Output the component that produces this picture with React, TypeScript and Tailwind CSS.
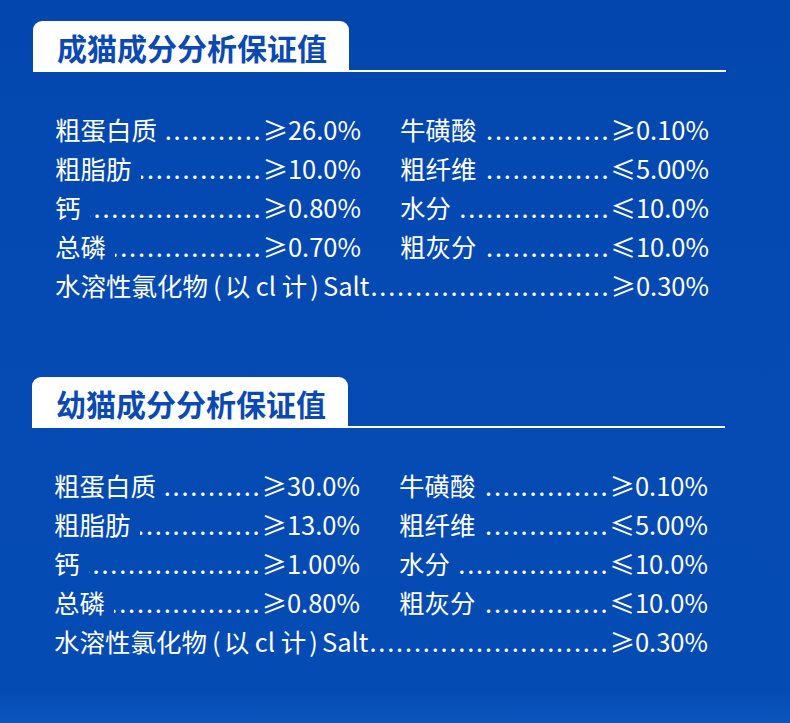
import React from "react";

type Item = { label: React.ReactNode; value: string; space?: boolean };

const DOTS = ".".repeat(110);

function Row({ label, value, space = true, className = "" }: Item & { className?: string }) {
  return (
    <div className={`flex h-[39px] items-center whitespace-nowrap ${className}`}>
      <span className="flex items-center">{label}</span>
      <span className={`flex flex-1 justify-end overflow-hidden tracking-[1.8px] ${space ? "ml-[9px]" : "ml-[1px]"}`}>
        <span>{DOTS}</span>
      </span>
      <span>{value}</span>
    </div>
  );
}

const saltLabel = (
  <>
    <span>水溶性氯化物</span>
    <span className="ml-[5px] mr-[3px]">(</span>
    <span>以 cl 计</span>
    <span className="ml-[3px] mr-[4px]">)</span>
    <span>Salt</span>
  </>
);

function Section({
  title,
  rows,
  salt,
}: {
  title: string;
  rows: [Item, Item][];
  salt: string;
}) {
  return (
    <div>
      <div className="flex items-end">
        <div className="flex h-[51px] w-[316px] items-center rounded-t-[9px] bg-white pl-[24px] pt-[1px] text-[30px] font-bold leading-none text-[#0a4ab2]">
          {title}
        </div>
        <div className="h-[2px] w-[377px] bg-white" />
      </div>
      <div className="mt-[37px] pl-[22px] text-[25.5px] leading-none text-white">
        {rows.map(([a, b], i) => (
          <div key={i} className="flex">
            <Row {...a} className="w-[306px]" />
            <Row {...b} className="ml-[39px] w-[309px]" />
          </div>
        ))}
        <Row label={saltLabel} value={salt} space={false} className="w-[654px]" />
      </div>
    </div>
  );
}

export default function App() {
  const adult: [Item, Item][] = [
    [
      { label: "粗蛋白质", value: "≥26.0%" },
      { label: "牛磺酸", value: "≥0.10%" },
    ],
    [
      { label: "粗脂肪", value: "≥10.0%" },
      { label: "粗纤维", value: "≤5.00%" },
    ],
    [
      { label: "钙", value: "≥0.80%" },
      { label: "水分", value: "≤10.0%" },
    ],
    [
      { label: "总磷", value: "≥0.70%" },
      { label: "粗灰分", value: "≤10.0%" },
    ],
  ];
  const kitten: [Item, Item][] = [
    [
      { label: "粗蛋白质", value: "≥30.0%" },
      { label: "牛磺酸", value: "≥0.10%" },
    ],
    [
      { label: "粗脂肪", value: "≥13.0%" },
      { label: "粗纤维", value: "≤5.00%" },
    ],
    [
      { label: "钙", value: "≥1.00%" },
      { label: "水分", value: "≤10.0%" },
    ],
    [
      { label: "总磷", value: "≥0.80%" },
      { label: "粗灰分", value: "≤10.0%" },
    ],
  ];

  return (
    <div
      className="h-[723px] w-[790px] overflow-hidden bg-[linear-gradient(180deg,#0347ae_0%,#044ab2_40%,#044bb3_95%,#0a55bd_100%)]"
      style={{ fontFamily: '"Noto Sans CJK SC", "Noto Sans", sans-serif' }}
    >
      <div className="pl-[33px] pt-[21px]">
        <Section title="成猫成分分析保证值" rows={adult} salt="≥0.30%" />
      </div>
      <div className="pl-[32px] pt-[73px]">
        <Section title="幼猫成分分析保证值" rows={kitten} salt="≥0.30%" />
      </div>
    </div>
  );
}
